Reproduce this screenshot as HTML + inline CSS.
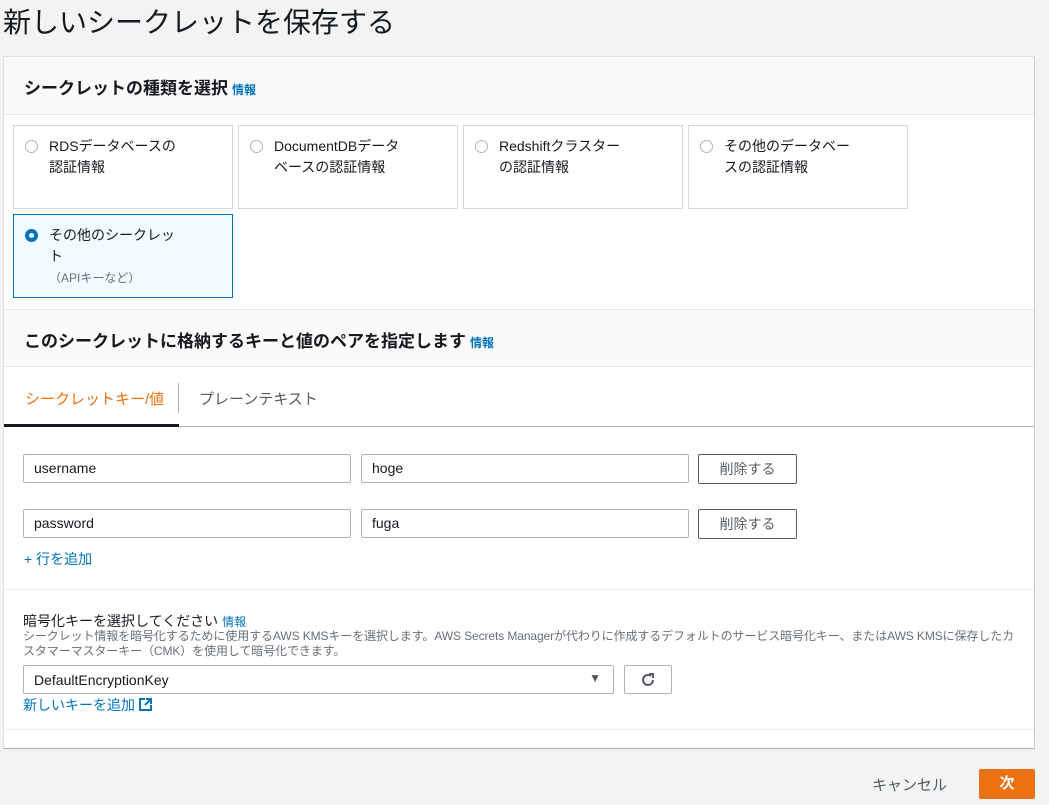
<!DOCTYPE html>
<html><head><meta charset="utf-8"><style>
*{box-sizing:border-box;margin:0;padding:0}
body{width:1049px;height:805px;background:#f2f3f3;font-family:"Liberation Sans","Noto Sans CJK JP",sans-serif;position:relative;overflow:hidden;color:#16191f}
.a{position:absolute}
h1{position:absolute;left:3px;top:1px;font-size:28px;font-weight:normal;color:#16191f}
.card{position:absolute;left:3px;top:56px;width:1032px;height:693px;background:#fff;border:1px solid #e0e2e2;border-right:1px solid #c8caca;border-bottom:1px solid #a9adad}
.hd{position:absolute;left:0;width:1030px;height:58px;background:#fafafa;border-bottom:1px solid #e5e7e7}
.hd .t{position:absolute;left:20px;top:17px;font-size:17px;font-weight:bold;white-space:nowrap}
.info{color:#0073bb;font-size:12px;font-weight:bold;margin-left:4px}
.tile{position:absolute;width:220px;height:84px;border:1px solid #d5dbdb;background:#fff;font-size:14px;line-height:21px;padding:10px 10px 0 35px}
.tile i{position:absolute;left:11px;top:14px;width:13px;height:13px;border-radius:50%;border:1px solid #aab7b8}
.sel{background:#f1faff;border-color:#0073bb}
.sel i{border:4px solid #0073bb}
.inp{position:absolute;height:29px;border:1px solid #aab7b8;border-radius:2px;font-size:14px;padding:5px 10px}
.btn{position:absolute;width:99px;height:30px;border:1px solid #545b64;border-radius:2px;font-size:14px;color:#545b64;text-align:center;line-height:28px}
.lnk{color:#0073bb}
</style></head><body>
<h1>新しいシークレットを保存する</h1>
<div class="card">
<div class="hd" style="top:0"><div class="t">シークレットの種類を選択<span class="info">情報</span></div></div>
<div class="tile" style="left:9px;top:68px"><i></i>RDSデータベースの<br>認証情報</div>
<div class="tile" style="left:234px;top:68px"><i></i>DocumentDBデータ<br>ベースの認証情報</div>
<div class="tile" style="left:459px;top:68px"><i></i>Redshiftクラスター<br>の認証情報</div>
<div class="tile" style="left:684px;top:68px"><i></i>その他のデータベー<br>スの認証情報</div>
<div class="tile sel" style="left:9px;top:157px"><i></i>その他のシークレッ<br>ト<br><span style="font-size:12px;color:#687078;line-height:16px">（APIキーなど）</span></div>
<div class="hd" style="top:252px;border-top:1px solid #e5e7e7"><div class="t">このシークレットに格納するキーと値のペアを指定します<span class="info">情報</span></div></div>
<div class="a" style="left:21px;top:331px;font-size:15px;color:#ec7211">シークレットキー/値</div>
<div class="a" style="left:174px;top:326px;width:1px;height:30px;background:#aab7b8"></div>
<div class="a" style="left:195px;top:331px;font-size:15px;color:#545b64">プレーンテキスト</div>
<div class="a" style="left:0;top:369px;width:1030px;height:1px;background:#aab7b8"></div>
<div class="a" style="left:0;top:367px;width:175px;height:3px;background:#16191f"></div>
<div class="inp" style="left:19px;top:397px;width:328px">username</div>
<div class="inp" style="left:357px;top:397px;width:328px">hoge</div>
<div class="btn" style="left:694px;top:397px">削除する</div>
<div class="inp" style="left:19px;top:452px;width:328px">password</div>
<div class="inp" style="left:357px;top:452px;width:328px">fuga</div>
<div class="btn" style="left:694px;top:452px">削除する</div>
<div class="a lnk" style="left:20px;top:492px;font-size:14px">+ 行を追加</div>
<div class="a" style="left:0;top:532px;width:1030px;height:1px;background:#eaeded"></div>
<div class="a" style="left:19px;top:554px;font-size:14px">暗号化キーを選択してください <span class="lnk" style="font-size:12px">情報</span></div>
<div class="a" style="left:19px;top:572px;font-size:12px;color:#687078;line-height:15px;width:997px;letter-spacing:-0.1px">シークレット情報を暗号化するために使用するAWS KMSキーを選択します。AWS Secrets Managerが代わりに作成するデフォルトのサービス暗号化キー、またはAWS KMSに保存したカスタマーマスターキー（CMK）を使用して暗号化できます。</div>
<div class="inp" style="left:19px;top:608px;width:591px;padding-top:6px">DefaultEncryptionKey<span style="position:absolute;right:12px;top:5px;font-size:12px;color:#545b64">▼</span></div>
<div class="a" style="left:620px;top:608px;width:48px;height:29px;border:1px solid #aab7b8;border-radius:2px;text-align:center">
<svg width="18" height="18" viewBox="0 0 18 18" style="margin-top:5px"><path d="M14 9a5 5 0 1 1-2-4" fill="none" stroke="#545b64" stroke-width="2"/><path d="M10 3h4v4" fill="none" stroke="#545b64" stroke-width="2"/></svg></div>
<div class="a lnk" style="left:19px;top:638px;font-size:14px">新しいキーを追加 <svg width="13" height="13" viewBox="0 0 13 13" style="vertical-align:-1px"><path d="M6 1H1v11h11V7" fill="none" stroke="#0073bb" stroke-width="2"/><path d="M7 1h5v5M12 1L6 7" fill="none" stroke="#0073bb" stroke-width="2"/></svg></div>
<div class="a" style="left:0;top:672px;width:1030px;height:1px;background:#eaeded"></div>
</div>
<div class="a" style="left:872px;top:774px;font-size:15px;color:#545b64">キャンセル</div>
<div class="a" style="left:979px;top:769px;width:56px;height:30px;background:#ec7211;border-radius:2px;color:#fff;font-size:15px;font-weight:bold;text-align:center;line-height:30px">次</div>
</body></html>
